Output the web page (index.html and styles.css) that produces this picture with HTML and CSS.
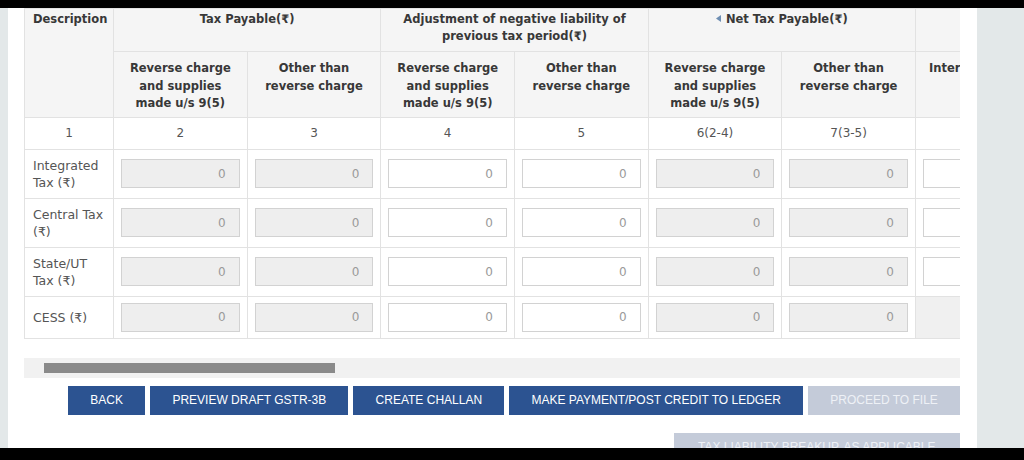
FILE: index.html
```html
<!DOCTYPE html>
<html lang="en">
<head>
<meta charset="utf-8">
<title>GSTR-3B Payment of Tax</title>
<link rel="stylesheet" href="styles.css">
</head>
<body>
<div class="screen">
  <div class="panel">
    <div class="table-wrap">
      <table class="tax">
        <colgroup>
          <col class="c-desc">
          <col class="c-val"><col class="c-val"><col class="c-val"><col class="c-val">
          <col class="c-val"><col class="c-val"><col class="c-val">
        </colgroup>
        <thead>
          <tr class="h1">
            <th rowspan="2" class="desc">Description</th>
            <th colspan="2">Tax Payable(₹)</th>
            <th colspan="2">Adjustment of negative liability of previous tax period(₹)</th>
            <th colspan="2"><svg class="caret" width="5" height="7" viewBox="0 0 5 7"><polygon points="5,0 5,7 0,3.5"/></svg>Net Tax Payable(₹)</th>
            <th></th>
          </tr>
          <tr class="h2">
            <th>Reverse charge and supplies made u/s 9(5)</th>
            <th>Other than reverse charge</th>
            <th>Reverse charge and supplies made u/s 9(5)</th>
            <th>Other than reverse charge</th>
            <th>Reverse charge and supplies made u/s 9(5)</th>
            <th>Other than reverse charge</th>
            <th>Interest payable</th>
          </tr>
        </thead>
        <tbody>
          <tr class="num">
            <td>1</td><td>2</td><td>3</td><td>4</td><td>5</td><td>6(2-4)</td><td>7(3-5)</td><td>8</td>
          </tr>
          <tr>
            <td class="label">Integrated Tax (₹)</td>
            <td class="cell"><input class="in ro" value="0" readonly></td>
            <td class="cell"><input class="in ro" value="0" readonly></td>
            <td class="cell"><input class="in" value="0"></td>
            <td class="cell"><input class="in" value="0"></td>
            <td class="cell"><input class="in ro" value="0" readonly></td>
            <td class="cell"><input class="in ro" value="0" readonly></td>
            <td class="cell"><input class="in" value="0"></td>
          </tr>
          <tr>
            <td class="label">Central Tax (₹)</td>
            <td class="cell"><input class="in ro" value="0" readonly></td>
            <td class="cell"><input class="in ro" value="0" readonly></td>
            <td class="cell"><input class="in" value="0"></td>
            <td class="cell"><input class="in" value="0"></td>
            <td class="cell"><input class="in ro" value="0" readonly></td>
            <td class="cell"><input class="in ro" value="0" readonly></td>
            <td class="cell"><input class="in" value="0"></td>
          </tr>
          <tr>
            <td class="label">State/UT Tax (₹)</td>
            <td class="cell"><input class="in ro" value="0" readonly></td>
            <td class="cell"><input class="in ro" value="0" readonly></td>
            <td class="cell"><input class="in" value="0"></td>
            <td class="cell"><input class="in" value="0"></td>
            <td class="cell"><input class="in ro" value="0" readonly></td>
            <td class="cell"><input class="in ro" value="0" readonly></td>
            <td class="cell"><input class="in" value="0"></td>
          </tr>
          <tr>
            <td class="label">CESS (₹)</td>
            <td class="cell"><input class="in ro" value="0" readonly></td>
            <td class="cell"><input class="in ro" value="0" readonly></td>
            <td class="cell"><input class="in" value="0"></td>
            <td class="cell"><input class="in" value="0"></td>
            <td class="cell"><input class="in ro" value="0" readonly></td>
            <td class="cell"><input class="in ro" value="0" readonly></td>
            <td class="cell blank"></td>
          </tr>
        </tbody>
      </table>
    </div>
    <div class="hscroll"><div class="thumb"></div></div>
    <div class="actions">
      <button class="btn">BACK</button>
      <button class="btn">PREVIEW DRAFT GSTR-3B</button>
      <button class="btn">CREATE CHALLAN</button>
      <button class="btn">MAKE PAYMENT/POST CREDIT TO LEDGER</button>
      <button class="btn disabled">PROCEED TO FILE</button>
    </div>
    <div class="actions second">
      <button class="btn disabled wide">TAX LIABILITY BREAKUP, AS APPLICABLE</button>
    </div>
  </div>
</div>
</body>
</html>
```

FILE: styles.css
```css
html, body {
  margin: 0;
  padding: 0;
}
body {
  background: #000;
  height: 460px;
  padding-top: 8px;
  box-sizing: border-box;
  overflow: hidden;
  font-family: "DejaVu Sans", Verdana, "Noto Sans", sans-serif;
}
.screen {
  height: 440px;
  background: #e3e8e9;
  padding-left: 8px;
  overflow: hidden;
}
.panel {
  width: 969px;
  height: 440px;
  background: #fff;
  padding: 0 17px 0 16px;
  box-sizing: border-box;
}
.table-wrap {
  width: 936px;
  overflow: hidden;
}
.tax {
  table-layout: fixed;
  width: 1025px;
  border-collapse: collapse;
  color: #555;
}
.c-desc { width: 89px; }
.c-val { width: 133.67px; }
.tax th,
.tax td {
  border: 1px solid #e2e2e2;
}
.tax th {
  background: #f5f5f5;
  color: #383838;
  font-size: 11.5px;
  font-weight: bold;
  line-height: 17.5px;
  vertical-align: top;
  text-align: center;
  padding: 8px 8px 4px;
}
.tax .h1 th {
  padding: 2px 8px 6px;
  line-height: 17px;
}
.tax th.desc {
  text-align: left;
  padding-left: 8px;
}
.caret {
  fill: #6f8fb3;
  margin-right: 5px;
  vertical-align: 1px;
}
.tax td {
  font-size: 12px;
  line-height: 17px;
  padding: 6px 7px;
  vertical-align: middle;
  background: #fff;
}
.tax .num td {
  text-align: center;
  padding: 7px 7px;
}
.tax td.label {
  font-size: 12.5px;
  padding: 7px 7px 7px 8px;
  color: #555;
}
.tax td.blank {
  background: #f0f0f0;
}
.in {
  display: block;
  width: 100%;
  height: 29px;
  box-sizing: border-box;
  border: 1px solid #d2d2d2;
  background: #fff;
  color: #9a9a9a;
  font-family: "DejaVu Sans", Verdana, sans-serif;
  font-size: 12px;
  text-align: right;
  padding: 0 13px 0 6px;
  margin: 0;
  outline: none;
}
.in.ro {
  background: #eeeeee;
}
.hscroll {
  margin-top: 19px;
  width: 936px;
  height: 20px;
  background: #f1f1f1;
  padding: 5px 0 0 20px;
  box-sizing: border-box;
}
.thumb {
  width: 291px;
  height: 10px;
  background: #8a8a8a;
}
.actions {
  display: flex;
  justify-content: flex-end;
  gap: 5px;
  width: 936px;
  margin-top: 8px;
}
.actions.second {
  margin-top: 18px;
}
.btn {
  height: 29px;
  padding: 0 22.2px;
  border: 0;
  margin: 0;
  background: #2c5391;
  color: #fff;
  font-family: "Liberation Sans", Arial, sans-serif;
  font-size: 12px;
  white-space: nowrap;
}
.btn.disabled {
  background: #c4cbd9;
  color: #eef1f6;
}
.btn.wide {
  padding: 0 24.5px;
}
```
